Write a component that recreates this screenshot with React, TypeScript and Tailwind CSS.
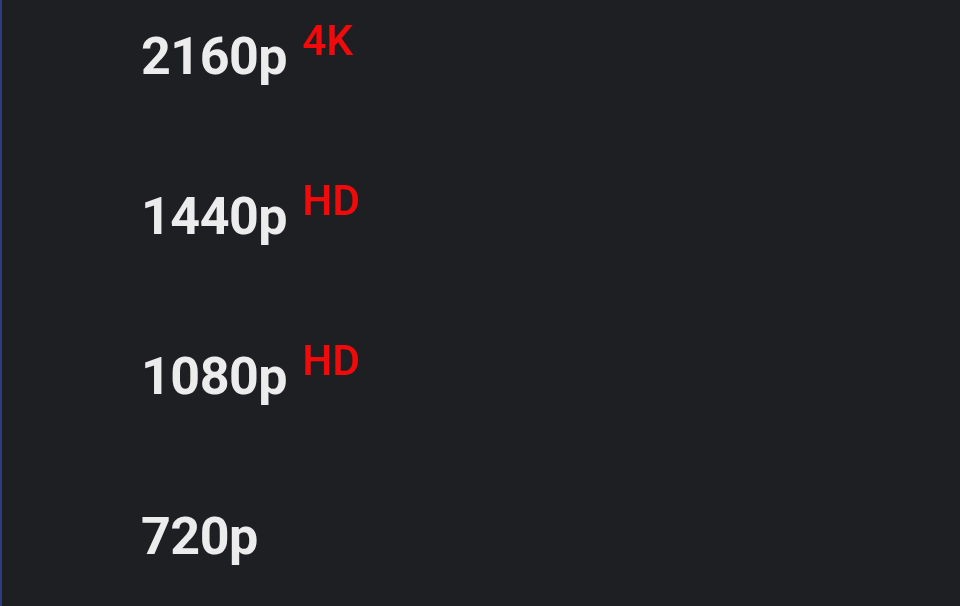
import React from 'react';

type Quality = { label: string; badge?: string };

const qualities: Quality[] = [
  { label: '2160p', badge: '4K' },
  { label: '1440p', badge: 'HD' },
  { label: '1080p', badge: 'HD' },
  { label: '720p' },
];

function QualityRow({ q }: { q: Quality }) {
  return (
    <div className="flex h-[160px] items-start pl-[139px]">
      <span className="text-[52px] font-bold leading-none tracking-[-0.5px] text-[#ececec]">{q.label}</span>
      {q.badge && (
        <span className="ml-[15px] mt-[-11px] text-[42px] font-medium leading-none text-[#f20a0a]">
          {q.badge}
        </span>
      )}
    </div>
  );
}

export default function App() {
  return (
    <div
      className="h-[606px] w-[960px] overflow-hidden border-l-2 border-[#2f3a80] bg-[#1e1f23] pt-[31px]"
      style={{ fontFamily: 'Roboto, "Noto Sans", sans-serif' }}
    >
      {qualities.map((q) => (
        <QualityRow key={q.label} q={q} />
      ))}
    </div>
  );
}
